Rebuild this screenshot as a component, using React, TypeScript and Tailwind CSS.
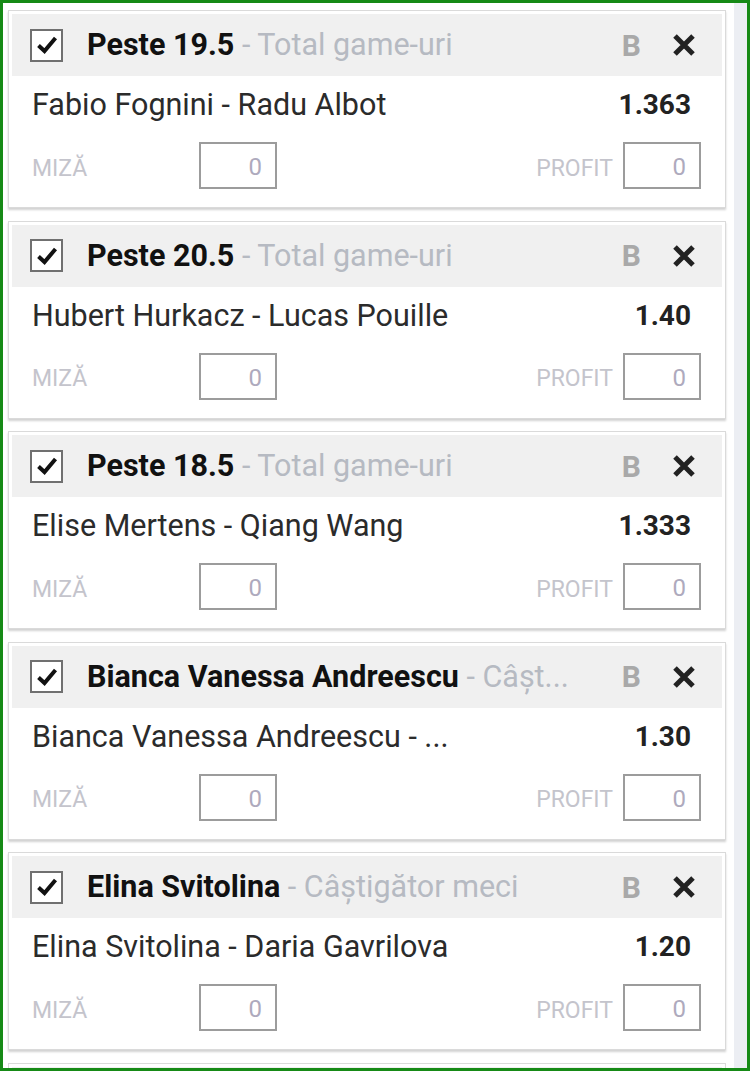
import React from 'react';

const bets = [
  { id: 1, pick: 'Peste 19.5', market: 'Total game-uri', match: 'Fabio Fognini - Radu Albot', odds: '1.363' },
  { id: 2, pick: 'Peste 20.5', market: 'Total game-uri', match: 'Hubert Hurkacz - Lucas Pouille', odds: '1.40' },
  { id: 3, pick: 'Peste 18.5', market: 'Total game-uri', match: 'Elise Mertens - Qiang Wang', odds: '1.333' },
  { id: 4, pick: 'Bianca Vanessa Andreescu', market: 'Câșt...', match: 'Bianca Vanessa Andreescu - ...', odds: '1.30' },
  { id: 5, pick: 'Elina Svitolina', market: 'Câștigător meci', match: 'Elina Svitolina - Daria Gavrilova', odds: '1.20' },
];

const CheckBox = () => (
  <div className="flex h-[33px] w-[33px] shrink-0 items-center justify-center border-2 border-[#707070] bg-white">
    <svg width="22" height="20" viewBox="0 0 22 20">
      <path d="M2.5 10.5 L8.5 16 L19.5 3" fill="none" stroke="#111" strokeWidth="4" strokeLinejoin="miter" />
    </svg>
  </div>
);

const CloseIcon = () => (
  <svg width="24" height="22" viewBox="0 0 24 22">
    <path d="M3 2 L21 20 M21 2 L3 20" stroke="#222" strokeWidth="5" strokeLinecap="butt" />
  </svg>
);

const StakeBox = () => (
  <div className="flex h-[47px] w-[78px] items-center justify-end border-2 border-[#9c9c9c] bg-white pr-[13px] pt-[3px] text-[24px] text-[#aeaabd]">
    0
  </div>
);

const BetCard = ({ bet }: { bet: (typeof bets)[0] }) => (
  <div className="h-[198px] shrink-0 border border-[#dadada] bg-white p-[3px] shadow-[0_2px_2px_rgba(0,0,0,0.18)]">
    <div className="flex h-[62px] items-center bg-[#f0f0f0] pl-[18px] pr-[26px]">
      <CheckBox />
      <div className="ml-[24px] min-w-0 flex-1 overflow-hidden whitespace-nowrap text-[30.5px] leading-normal">
        <span className="font-bold text-[#111]">{bet.pick}</span>
        <span className="text-[#b6bac2]"> - {bet.market}</span>
      </div>
      <span className="ml-4 text-[30px] font-bold leading-normal text-[#a9a9a9]">B</span>
      <div className="ml-[31px]">
        <CloseIcon />
      </div>
    </div>
    <div className="flex h-[58px] items-center justify-between pl-[20px] pr-[31px]">
      <span className="whitespace-nowrap text-[30.5px] leading-normal text-[#2b2b2b]">{bet.match}</span>
      <span className="text-[28px] font-bold leading-normal text-[#222]">{bet.odds}</span>
    </div>
    <div className="mt-[8px] flex items-center pl-[20px] pr-[21px]">
      <span className="w-[167px] pt-[7px] text-[23px] text-[#c4c4cc]">MIZĂ</span>
      <StakeBox />
      <span className="ml-auto mr-[10px] pt-[7px] text-[23px] text-[#c4c4cc]">PROFIT</span>
      <StakeBox />
    </div>
  </div>
);

export default function App() {
  return (
    <div
      className="flex h-[1071px] w-[750px] overflow-hidden border-[3px] border-[#168a16] bg-white"
      style={{ fontFamily: 'Roboto, "Noto Sans", sans-serif' }}
    >
      <div className="flex flex-1 flex-col gap-[12.5px] pl-[5px] pr-[8px] pt-[7px]">
        {bets.map((bet) => (
          <BetCard key={bet.id} bet={bet} />
        ))}
        <div className="h-[40px] shrink-0 border border-[#dadada] bg-white p-[3px]">
          <div className="h-full bg-[#f0f0f0]" />
        </div>
      </div>
      <div className="w-[13px] bg-[#eceef3]" />
    </div>
  );
}
